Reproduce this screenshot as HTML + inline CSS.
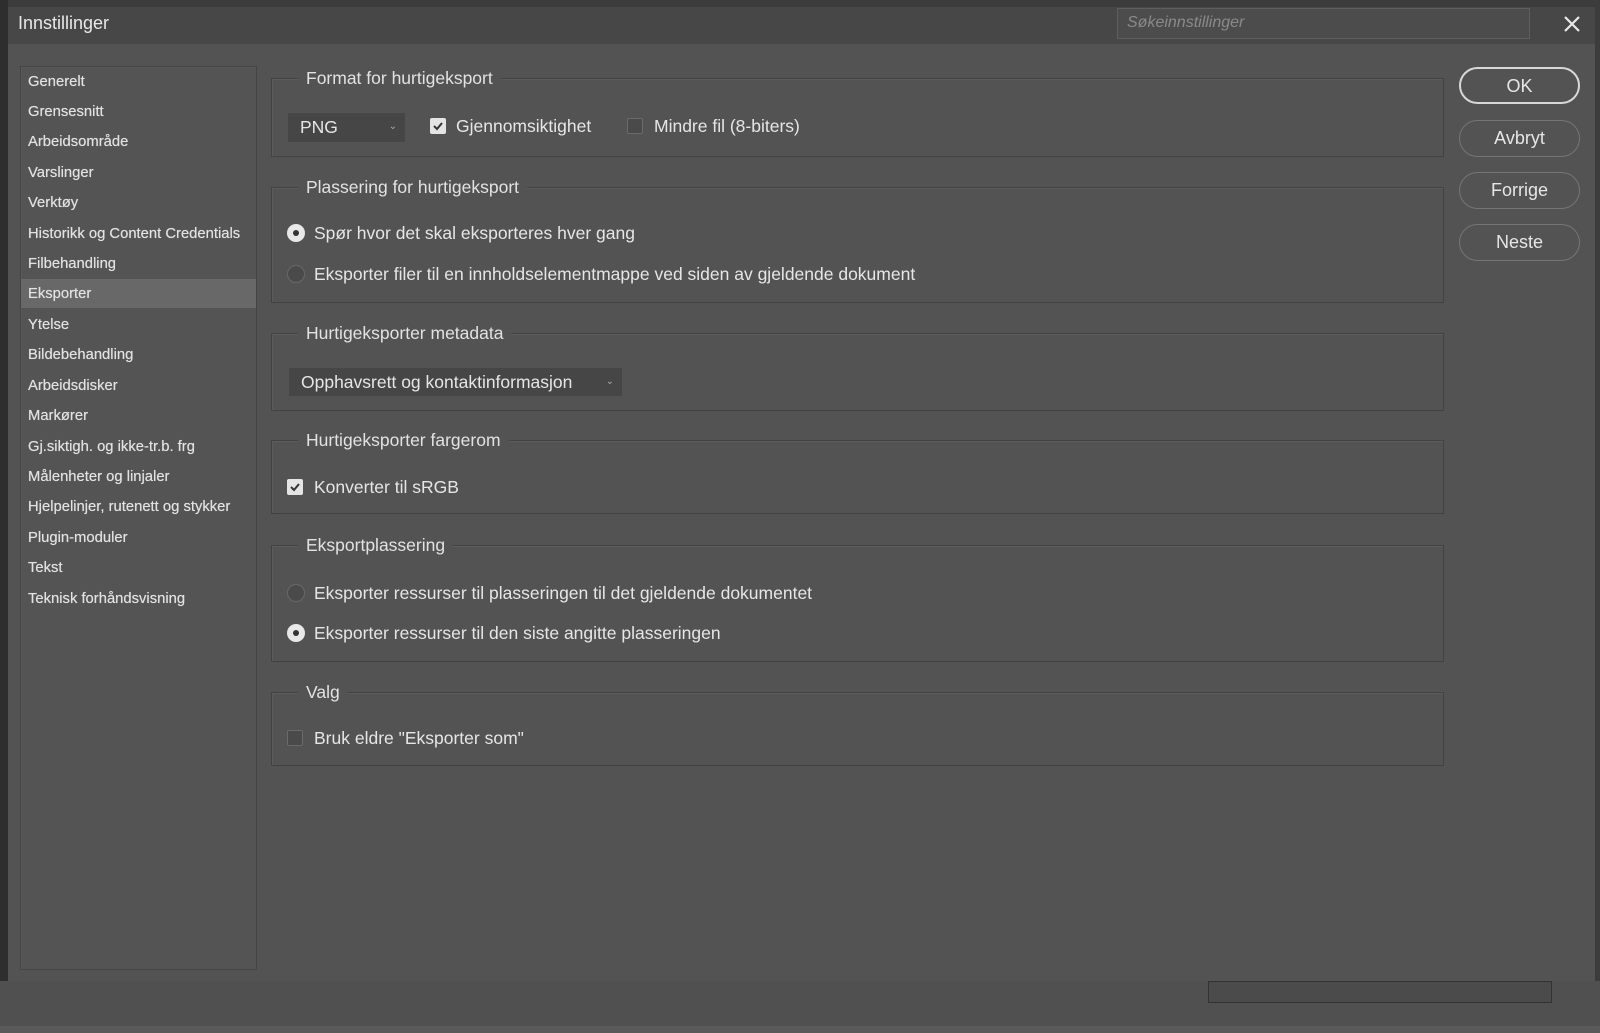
<!DOCTYPE html>
<html><head><meta charset="utf-8"><style>
*{box-sizing:border-box;margin:0;padding:0}
body{width:1600px;height:1033px;background:#3c3c3c;font-family:"Liberation Sans",sans-serif;position:relative;overflow:hidden;color:#e4e4e4}
.abs{position:absolute}
#dlg{left:8px;top:7px;width:1587px;height:974px;background:#535353}
#title{left:8px;top:7px;width:1587px;height:37px;background:#474747}
.fs{position:absolute;left:271px;width:1173px;border:1px solid #424242;box-shadow:inset 1px 1px 0 #5c5c5c}
.lg{position:absolute;background:#535353;padding:0 8px;font-size:17.5px;color:#e2e2e2;top:-12px;left:26px;line-height:22px}
.t{position:absolute;font-size:17.5px;color:#e6e6e6;white-space:nowrap;line-height:20px}
.side{position:absolute;left:28px;font-size:14.8px;color:#e2e2e2;white-space:nowrap;text-shadow:0 0 0.5px #e2e2e2}
.cb{position:absolute;width:16px;height:16px;border-radius:2px}
.cb.on{background:#e4e4e4}
.cb.off{background:#4a4a4a;border:1px solid #6a6a6a}
.rd{position:absolute;width:18px;height:18px;border-radius:50%}
.rd.on{background:#e8e8e8}
.rd.on::after{content:"";position:absolute;left:6px;top:6px;width:6px;height:6px;border-radius:50%;background:#333}
.rd.off{background:#4a4a4a;border:1px solid #686868}
.btn{position:absolute;left:1459px;width:121px;height:37px;border-radius:19px;border:1.5px solid #757575;font-size:18px;color:#e6e6e6;text-align:center;line-height:34px}
.dd{position:absolute;background:#464646;font-size:17.5px;color:#e6e6e6;line-height:28px;padding-left:12px}
.dd span{position:absolute;right:8px;top:0;font-size:10px;color:#aaa}
</style></head><body>
<div class="abs" style="left:0;top:0;width:8px;height:1033px;background:#2e2e2e"></div>
<div class="abs" style="left:0;top:981px;width:1600px;height:52px;background:#505050"></div>
<div class="abs" style="left:0;top:1026px;width:1600px;height:7px;background:#5a5a5a"></div>
<div class="abs" style="left:1208px;top:981px;width:344px;height:22px;background:#4b4b4b;border:1px solid #333"></div>
<div class="abs" id="dlg"></div>
<div class="abs" id="title"></div>
<div class="abs" style="left:18px;top:13px;font-size:18px;color:#e8e8e8">Innstillinger</div>
<div class="abs" style="left:1117px;top:8px;width:413px;height:31px;background:#4c4c4c;border:1px solid #5e5e5e"></div>
<div class="abs" style="left:1127px;top:14px;font-size:16px;font-style:italic;color:#8a8a8a">Søkeinnstillinger</div>
<svg class="abs" style="left:1562px;top:14px" width="20" height="20" viewBox="0 0 20 20"><path d="M3 3L17 17M17 3L3 17" stroke="#e8e8e8" stroke-width="2.2"/></svg>

<div class="abs" style="left:20px;top:66px;width:237px;height:904px;border:1px solid #444;box-shadow:inset 1px 1px 0 #5a5a5a;background:#545454"></div>
<div class="abs" style="left:21px;top:279px;width:235px;height:29px;background:#686868"></div>
<div class="side" style="top:74px">Generelt</div>
<div class="side" style="top:104px">Grensesnitt</div>
<div class="side" style="top:134px">Arbeidsområde</div>
<div class="side" style="top:165px">Varslinger</div>
<div class="side" style="top:195px">Verktøy</div>
<div class="side" style="top:226px">Historikk og Content Credentials</div>
<div class="side" style="top:256px">Filbehandling</div>
<div class="side" style="top:286px">Eksporter</div>
<div class="side" style="top:317px">Ytelse</div>
<div class="side" style="top:347px">Bildebehandling</div>
<div class="side" style="top:378px">Arbeidsdisker</div>
<div class="side" style="top:408px">Markører</div>
<div class="side" style="top:439px">Gj.siktigh. og ikke-tr.b. frg</div>
<div class="side" style="top:469px">Målenheter og linjaler</div>
<div class="side" style="top:499px">Hjelpelinjer, rutenett og stykker</div>
<div class="side" style="top:530px">Plugin-moduler</div>
<div class="side" style="top:560px">Tekst</div>
<div class="side" style="top:591px">Teknisk forhåndsvisning</div>

<div class="fs" style="top:78px;height:79px"><div class="lg">Format for hurtigeksport</div></div>
<div class="dd" style="left:288px;top:113px;width:117px;height:29px">PNG<span>⌄</span></div>
<div class="cb on" style="left:430px;top:118px"></div>
<svg class="abs" style="left:430px;top:118px" width="16" height="16"><path d="M4 8l3 3 5-6" stroke="#333" stroke-width="2" fill="none"/></svg>
<div class="t" style="left:456px;top:116px">Gjennomsiktighet</div>
<div class="cb off" style="left:627px;top:118px"></div>
<div class="t" style="left:654px;top:116px">Mindre fil (8-biters)</div>

<div class="fs" style="top:187px;height:116px"><div class="lg">Plassering for hurtigeksport</div></div>
<div class="rd on" style="left:287px;top:224px"></div>
<div class="t" style="left:314px;top:223px">Spør hvor det skal eksporteres hver gang</div>
<div class="rd off" style="left:287px;top:265px"></div>
<div class="t" style="left:314px;top:264px">Eksporter filer til en innholdselementmappe ved siden av gjeldende dokument</div>

<div class="fs" style="top:333px;height:78px"><div class="lg">Hurtigeksporter metadata</div></div>
<div class="dd" style="left:289px;top:368px;width:333px;height:28px">Opphavsrett og kontaktinformasjon<span>⌄</span></div>

<div class="fs" style="top:440px;height:74px"><div class="lg">Hurtigeksporter fargerom</div></div>
<div class="cb on" style="left:287px;top:479px"></div>
<svg class="abs" style="left:287px;top:479px" width="16" height="16"><path d="M4 8l3 3 5-6" stroke="#333" stroke-width="2" fill="none"/></svg>
<div class="t" style="left:314px;top:477px">Konverter til sRGB</div>

<div class="fs" style="top:545px;height:117px"><div class="lg">Eksportplassering</div></div>
<div class="rd off" style="left:287px;top:584px"></div>
<div class="t" style="left:314px;top:583px">Eksporter ressurser til plasseringen til det gjeldende dokumentet</div>
<div class="rd on" style="left:287px;top:624px"></div>
<div class="t" style="left:314px;top:623px">Eksporter ressurser til den siste angitte plasseringen</div>

<div class="fs" style="top:692px;height:74px"><div class="lg">Valg</div></div>
<div class="cb off" style="left:287px;top:730px"></div>
<div class="t" style="left:314px;top:728px">Bruk eldre "Eksporter som"</div>

<div class="btn" style="top:67px;border-color:#d8d8d8;border-width:2px">OK</div>
<div class="btn" style="top:120px">Avbryt</div>
<div class="btn" style="top:172px">Forrige</div>
<div class="btn" style="top:224px">Neste</div>
</body></html>
